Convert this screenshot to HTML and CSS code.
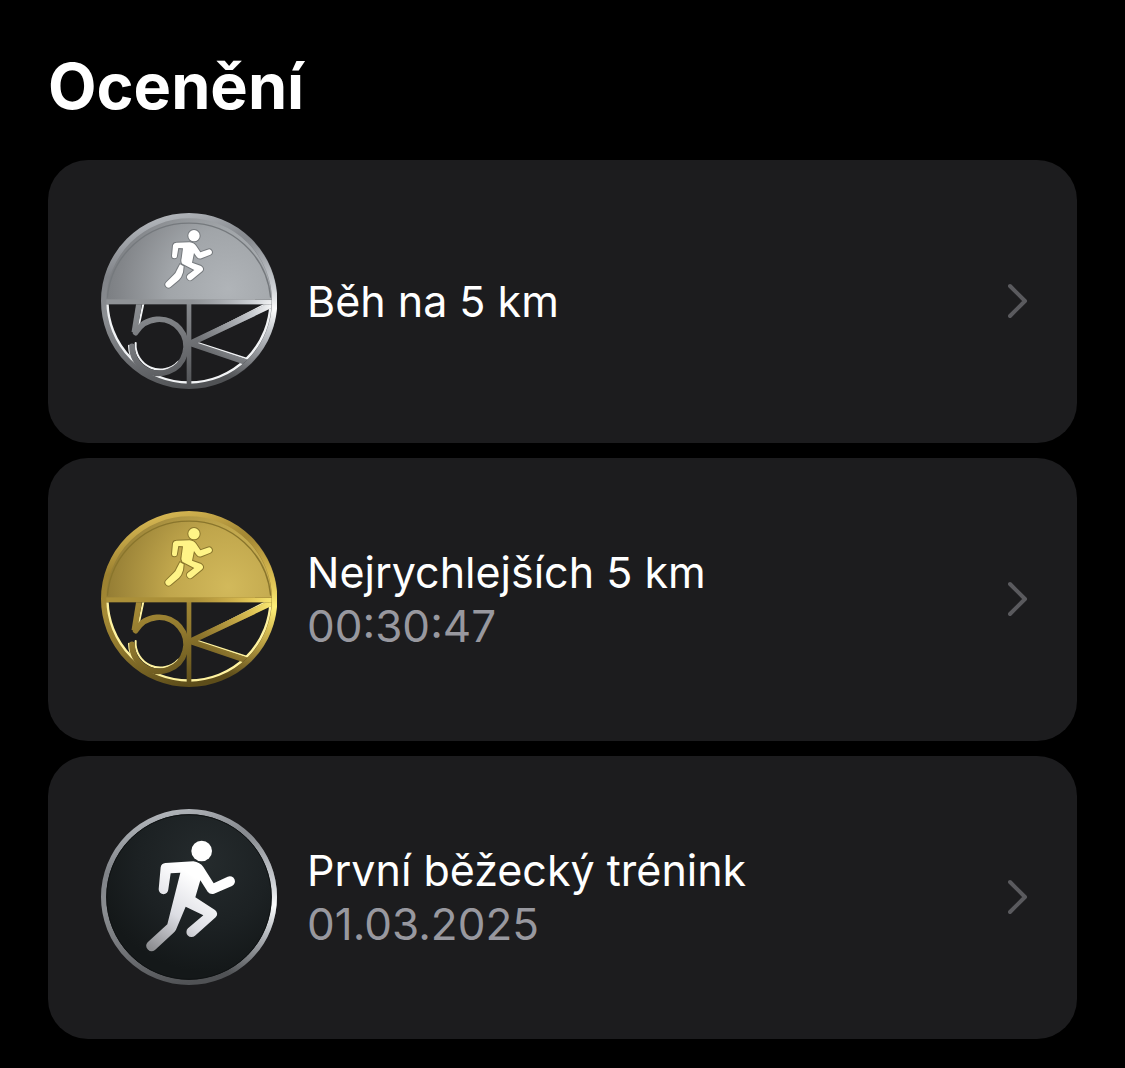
FILE: index.html
```html
<!DOCTYPE html>
<html lang="cs">
<head>
<meta charset="utf-8">
<meta name="viewport" content="width=device-width, initial-scale=1">
<title>Ocenění</title>
<link rel="stylesheet" href="styles.css">
</head>
<body>
<svg class="defs" width="0" height="0" aria-hidden="true">
  <defs>
    <radialGradient id="silver-face" gradientUnits="userSpaceOnUse" cx="400" cy="250" r="400">
      <stop offset="0" stop-color="#b0b4b8"/><stop offset=".45" stop-color="#a1a5a9"/><stop offset=".8" stop-color="#84878b"/><stop offset="1" stop-color="#75787c"/>
    </radialGradient>
    <linearGradient id="silver-metal" gradientUnits="userSpaceOnUse" x1="120" y1="22" x2="260" y2="550">
      <stop offset="0" stop-color="#bcc0c5"/><stop offset=".3" stop-color="#808388"/><stop offset=".5" stop-color="#8b8e92"/><stop offset=".7" stop-color="#77797d"/><stop offset="1" stop-color="#505255"/>
    </linearGradient>
    <radialGradient id="silver-shine" gradientUnits="userSpaceOnUse" cx="540" cy="310" r="250">
      <stop offset="0" stop-color="#fff"/><stop offset=".3" stop-color="#dfe3e8" stop-opacity=".75"/><stop offset="1" stop-color="#c0c4ca" stop-opacity="0"/>
    </radialGradient>
    <radialGradient id="gold-face" gradientUnits="userSpaceOnUse" cx="400" cy="250" r="400">
      <stop offset="0" stop-color="#d2b95b"/><stop offset=".45" stop-color="#c0a64c"/><stop offset=".8" stop-color="#9f873a"/><stop offset="1" stop-color="#8c752f"/>
    </radialGradient>
    <linearGradient id="gold-metal" gradientUnits="userSpaceOnUse" x1="120" y1="22" x2="260" y2="550">
      <stop offset="0" stop-color="#e2c25a"/><stop offset=".3" stop-color="#9c8130"/><stop offset=".5" stop-color="#a58a36"/><stop offset=".7" stop-color="#91792e"/><stop offset="1" stop-color="#5d4d1a"/>
    </linearGradient>
    <radialGradient id="gold-shine" gradientUnits="userSpaceOnUse" cx="540" cy="310" r="250">
      <stop offset="0" stop-color="#fff27a"/><stop offset=".3" stop-color="#f4d860" stop-opacity=".75"/><stop offset="1" stop-color="#e0b850" stop-opacity="0"/>
    </radialGradient>
    <radialGradient id="dark-face" gradientUnits="userSpaceOnUse" cx="330" cy="180" r="330">
      <stop offset="0" stop-color="#252b2d"/><stop offset=".6" stop-color="#1c2123"/><stop offset="1" stop-color="#141819"/>
    </radialGradient>
    <linearGradient id="runner-fill" gradientUnits="userSpaceOnUse" x1="320" y1="240" x2="180" y2="450">
      <stop offset="0" stop-color="#fff"/><stop offset=".5" stop-color="#dcdde3"/><stop offset="1" stop-color="#8c8d90"/>
    </linearGradient>
    <clipPath id="lower-half"><rect x="0" y="296" width="570" height="274"/></clipPath>
    <clipPath id="inside-ring"><circle cx="282" cy="286" r="252"/></clipPath>

    <symbol id="medal-5k" viewBox="18 22 528 528">
      <path class="face" d="M26 288A256 256 0 0 1 538 288Z"/>
      <path class="groove" d="M37 276A246 246 0 0 1 527 276"/>
      <g clip-path="url(#lower-half)">
        <path class="rim-light" d="M36 286A246 246 0 0 0 528 286"/>
        <g clip-path="url(#inside-ring)">
          <path class="edge" d="M146 290L130 366"/>
          <path class="edge" d="M122 412A74 74 0 0 0 250 468"/>
          <path class="edge" d="M538 282L300 404"/>
          <path class="edge" d="M306 411L462 461"/>
          <path class="edge" d="M102 420A90 90 0 0 0 124 478"/>
          <path class="bar" d="M135 276L118 380"/>
          <path class="bar" stroke-linecap="round" d="M122 381A81 81 0 1 1 111 422"/>
          <path class="bar" d="M548 289L286 413L470 475"/>
          <path class="bar shine" d="M548 289L286 413L470 475"/>
        </g>
      </g>
      <path class="bar thin" d="M282 290V540"/>
      <rect class="crossbar" x="30" y="281" width="504" height="15"/>
      <path class="bar thin shine" d="M30 288L533 289"/>
      <circle class="bar rim" cx="282" cy="286" r="256"/>
      <circle class="bar rim shine" cx="282" cy="286" r="257"/>
      <g class="runner">
        <circle cx="297" cy="90" r="17"/>
        <path d="M255 176L266 182L264 200Q260 215 252 222L227 243a9 9 0 0 1-13-13L236 208Q243 202 246 193Z"/>
        <path d="M244 111L284 110Q298 112 304 122L316 140L338 132a8 8 0 0 1 8 15L319 158Q311 161 305 153L297 142L291 171L318 181Q328 188 322 196L292 221a9 9 0 0 1-13-14L298 193L262 174Q257 168 260 158L264 128L250 127L246 150a7 7 0 0 1-15 0L234 119Q236 111 244 111Z"/>
      </g>
    </symbol>
  </defs>
</svg>

<main class="page">
  <h1 class="title">Ocenění</h1>
  <ul class="awards">
    <li>
      <a class="card" href="#beh-5-km">
        <svg class="medal silver" aria-hidden="true"><use href="#medal-5k"/></svg>
        <span class="text"><span class="name">Běh na 5 km</span></span>
        <svg class="chevron" viewBox="0 0 20 36" aria-hidden="true"><path d="M2 3L17 18L2 33"/></svg>
      </a>
    </li>
    <li>
      <a class="card" href="#nejrychlejsich-5-km">
        <svg class="medal gold" aria-hidden="true"><use href="#medal-5k"/></svg>
        <span class="text"><span class="name">Nejrychlejších 5 km</span><span class="detail">00:30:47</span></span>
        <svg class="chevron" viewBox="0 0 20 36" aria-hidden="true"><path d="M2 3L17 18L2 33"/></svg>
      </a>
    </li>
    <li>
      <a class="card" href="#prvni-trenink">
        <svg class="medal silver" viewBox="18 22 528 528" aria-hidden="true">
          <circle cx="282" cy="286" r="256" fill="url(#dark-face)"/>
          <circle class="bar rim" cx="282" cy="286" r="256"/>
          <circle class="bar rim shine" cx="282" cy="286" r="256"/>
          <circle cx="282" cy="286" r="247" fill="none" stroke="#0e1112" stroke-width="3"/>
          <circle cx="320" cy="148" r="31" fill="#fff"/>
          <path fill="url(#runner-fill)" d="M211 184L295 179Q315 182 325 196L356 245L398 225a15 15 0 0 1 13 28L357 276Q345 279 338 270L316 236L301 287L360 325Q372 336 362 347L300 402a15 15 0 0 1-21-22L325 341L272 315L243 384Q240 390 235 394L180 445a16 16 0 0 1-22-23L217 368L256 213L227 215L220 263a14 14 0 0 1-29 0L197 197Q199 185 211 184Z"/>
        </svg>
        <span class="text"><span class="name">První běžecký trénink</span><span class="detail">01.03.2025</span></span>
        <svg class="chevron" viewBox="0 0 20 36" aria-hidden="true"><path d="M2 3L17 18L2 33"/></svg>
      </a>
    </li>
  </ul>
</main>
</body>
</html>
```
FILE: styles.css
```css
* { box-sizing: border-box; }

body {
  margin: 0;
  background: #000;
  color: #fff;
  font-family: Inter, "Liberation Sans", sans-serif;
}

.defs { position: absolute; }

.page { padding: 46px 48px 29px; }

.title {
  margin: 0 0 34px;
  font-size: 63px;
  line-height: 80px;
  font-weight: 700;
}

.awards {
  display: grid;
  gap: 15px;
  margin: 0;
  padding: 0;
  list-style: none;
}

.card {
  display: flex;
  align-items: center;
  gap: 30px;
  min-height: 283px;
  padding: 52px 49px 54px 53px;
  border-radius: 40px;
  background: #1c1c1e;
  color: inherit;
  text-decoration: none;
}

.medal {
  flex: none;
  width: 176px;
  height: 176px;
}

.text {
  flex: 1;
  display: flex;
  flex-direction: column;
  line-height: 54px;
}

.name { font-size: 43px; }

.detail {
  color: #98989f;
  font-size: 44px;
}

.chevron {
  flex: none;
  width: 20px;
  height: 36px;
  fill: none;
  stroke: #5a5a5e;
  stroke-width: 4;
  stroke-linecap: round;
  stroke-linejoin: round;
}

/* Medal metals */
.silver {
  --face: url(#silver-face);
  --metal: url(#silver-metal);
  --shine: url(#silver-shine);
  --light: #f1f3f5;
  --figure: #fff;
  --groove: #75797d;
  --crossbar: #8f9296;
}

.gold {
  --face: url(#gold-face);
  --metal: url(#gold-metal);
  --shine: url(#gold-shine);
  --light: #fff3a0;
  --figure: #fff487;
  --groove: #89752c;
  --crossbar: #ab9039;
}

.face { fill: var(--face); }
.groove { fill: none; stroke: var(--groove); stroke-width: 4; }
.bar { fill: none; stroke: var(--metal); stroke-width: 17; }
.thin { stroke-width: 14; }
.rim { stroke-width: 16; }
.crossbar { fill: var(--crossbar); }
.edge { fill: none; stroke: var(--light); stroke-width: 6; stroke-linecap: round; }
.shine { stroke: var(--shine); }
.rim-light { fill: none; stroke: var(--light); stroke-width: 10; }
.runner { fill: var(--figure); stroke: var(--groove); stroke-width: 6; paint-order: stroke; }
```
